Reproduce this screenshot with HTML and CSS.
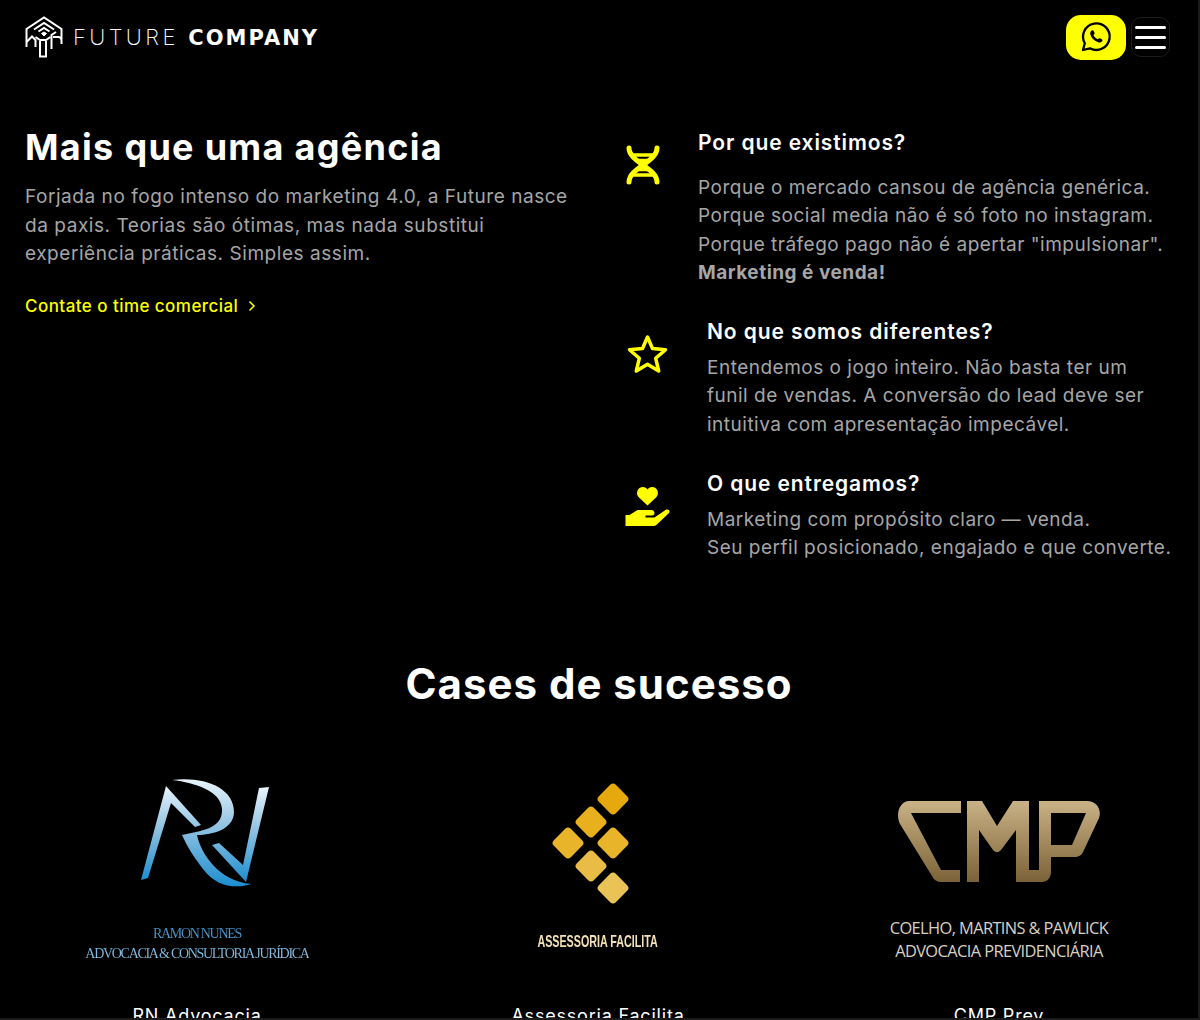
FILE: index.html
```html
<!DOCTYPE html>
<html lang="pt-BR">

<head>
    <meta charset="UTF-8">
    <title>Future Company</title>
    <link rel="stylesheet" href="styles.css">
</head>

<body>
    <div class="page">
        <header class="top">
            <a class="brand" href="#">
                <svg class="brand-mark" viewBox="0 0 38 42" fill="none" stroke="#fff" stroke-width="2">
                    <path d="M1.500 31V13L19 1.500 36.500 13v10" />
                    <path d="M1.500 26 7 20.500l3.500 3.500v7" />
                    <path d="M26.500 33V19l4.500-3" />
                    <path d="M28 21h5.500c2 0 3 1.500 3 3.500V28" />
                    <path d="M15 25v15.500h6V25" />
                    <path d="M10.500 21 15 24h6l4.500-3" />
                    <path d="M9 13.500 19 7l10 6.500" />
                    <path d="M13.500 15.500 19 12l5.500 3.500" />
                    <path d="M16.500 17.500 19 16l2.500 1.500L19 20z" fill="#fff" stroke-width="1" />
                </svg>
                <span class="brand-name">FUTURE <b>COMPANY</b></span>
            </a>
            <div class="top-actions">
                <a class="wa-btn" href="#">
                    <svg viewBox="0 0 32 32" width="32" height="32" fill="none" stroke="#000" stroke-width="2.300">
                        <path d="M3 29l1.800-6.800A13.300 13.300 0 1 1 10 27.300z" stroke-linejoin="round" />
                        <path d="M11.600 9.600c.6-.6 1.500-.5 1.900.2l1 1.900c.3.5.2 1-.2 1.400l-.8.800c.8 2 2.300 3.500 4.400 4.400l.8-.8c.4-.4.9-.5 1.400-.2l1.800 1c.7.4.8 1.300.2 1.900-1 1.100-2.400 1.500-3.800 1-4.100-1.300-6.900-4.100-8-8-.3-1.200.2-2.600 1.300-3.600z" fill="#000" stroke="none" />
                    </svg>
                </a>
                <button class="menu-btn"><i></i><i></i><i></i></button>
            </div>
        </header>

        <section class="about">
            <div class="about-left">
                <h1>Mais que uma agência</h1>
                <p>Forjada no fogo intenso do marketing 4.0, a Future nasce da paxis. Teorias são ótimas, mas nada substitui experiência práticas. Simples assim.</p>
                <a class="more" href="#">Contate o time comercial
                    <svg viewBox="0 0 8 12" width="8" height="12" fill="none" stroke="#ffff00" stroke-width="1.500"><path d="M1.500 1.500 6 6l-4.500 4.500" /></svg>
                </a>
            </div>
            <div class="about-right">
                <div class="item item-first">
                    <svg class="item-icon" viewBox="0 0 36 40" fill="none" stroke="#ffff00" stroke-width="5" stroke-linecap="round">
                        <path d="M4 3c0 14 28 20 28 34" />
                        <path d="M32 3c0 14-28 20-28 34" />
                        <path d="M5 10h26M12 15.500h12M12 24.500h12M5 30h26" stroke-width="3.500" stroke-linecap="butt" />
                    </svg>
                    <div>
                        <h3>Por que existimos?</h3>
                        <p>Porque o mercado cansou de agência genérica.<br>Porque social media não é só foto no instagram.<br>Porque tráfego pago não é apertar "impulsionar".<br><b>Marketing é venda!</b></p>
                    </div>
                </div>
                <div class="item">
                    <svg class="item-icon" viewBox="0 0 40 40" fill="none" stroke="#ffff00" stroke-width="3.500" stroke-linejoin="round">
                        <path d="M20 3l5 11.500 13 1.200-9.800 8.600 3 12.700L20 30.200 8.800 37l3-12.700L2 15.700l13-1.200z" />
                    </svg>
                    <div>
                        <h3>No que somos diferentes?</h3>
                        <p>Entendemos o jogo inteiro. Não basta ter um funil de vendas. A conversão do lead deve ser intuitiva com apresentação impecável.</p>
                    </div>
                </div>
                <div class="item">
                    <svg class="item-icon" viewBox="0 0 44 40" fill="#ffff00">
                        <path d="M22 19.500 13.500 11.500C9.500 7.500 12 1 17.500 1c2 0 3.500 1 4.500 2.500C23 2 24.500 1 26.500 1c5.500 0 8 6.500 4 10.500z" />
                        <path d="M0 29h4l8-5h14c3.500 0 4 5 1 5.500h-7v2h9l11-7.500c3-1.500 5 1 3.500 3L33 37c-2 2-3 3-5 3H0z" />
                    </svg>
                    <div>
                        <h3>O que entregamos?</h3>
                        <p>Marketing com propósito claro — venda.<br>Seu perfil posicionado, engajado e que converte.</p>
                    </div>
                </div>
            </div>
        </section>

        <section class="cases">
            <h2>Cases de sucesso</h2>
            <div class="case-list">
                <div class="case">
                    <div class="logo">
                        <svg class="rn-mark" viewBox="0 0 130 110" width="130" height="110">
                            <defs>
                                <linearGradient id="rnBlue" x1="0" y1="0" x2="0" y2="1">
                                    <stop offset="0" stop-color="#e8f4fb" />
                                    <stop offset="0.5" stop-color="#86bde0" />
                                    <stop offset="1" stop-color="#1c8ed0" />
                                </linearGradient>
                            </defs>
                            <path fill="url(#rnBlue)" d="M0 101 25 7 60 46 54 48 30 24 7 99Z" />
                            <path fill="url(#rnBlue)" d="M31 1C62-3 93 8 93 33 93 50 72 56 56 56 60 75 78 102 110 105 95 110 75 108 62 90 52 77 46 67 41 56 60 52 82 50 81 30 80 12 55 4 31 1Z" />
                            <path fill="url(#rnBlue)" d="M71 66 78 64 102 86 118 9 128 8 105 103Z" />
                        </svg>
                        <div class="rn-text">RAMON NUNES<br>ADVOCACIA &amp; CONSULTORIA JURÍDICA</div>
                    </div>
                    <h4>RN Advocacia</h4>
                </div>
                <div class="case">
                    <div class="logo">
                        <div class="diamonds">
                            <i class="d1"></i><i class="d2"></i><i class="d3"></i><i class="d4"></i><i class="d5"></i><i class="d6"></i>
                        </div>
                        <div class="af-text">ASSESSORIA FACILITA</div>
                    </div>
                    <h4>Assessoria Facilita</h4>
                </div>
                <div class="case">
                    <div class="logo">
                        <svg class="cmp-mark" viewBox="0 0 204 84" width="204" height="84">
                            <defs>
                                <linearGradient id="cmpGold" x1="0" y1="0" x2="0" y2="1">
                                    <stop offset="0" stop-color="#c9b285" />
                                    <stop offset="1" stop-color="#7b6238" />
                                </linearGradient>
                            </defs>
                            <path fill="url(#cmpGold)" d="M12 1H64V13H14L44 70H63V82H44C40 82 37 80 35 76L3 24C-2 14 3 1 12 1Z" />
                            <path fill="url(#cmpGold)" d="M70 1H85L100 26 116 1H132V82H119V30L104 50C101 53 99 53 96 50L82 30V82H70Z" />
                            <path fill="url(#cmpGold)" fill-rule="evenodd" d="M142 1H190C200 1 205 10 202 18L187 50C185 55 182 57 178 57H154V72C154 78 150 82 145 82H125V70H142ZM154 13V45H175L189 13Z" />
                        </svg>
                        <div class="cmp-text">COELHO, MARTINS &amp; PAWLICK<br>ADVOCACIA PREVIDENCIÁRIA</div>
                    </div>
                    <h4>CMP Prev</h4>
                </div>
            </div>
        </section>
    </div>
</body>

</html>
```

FILE: styles.css
```css
* {
    padding: 0;
    margin: 0;
    box-sizing: border-box;
}

html,
body {
    height: 1020px;
    overflow: hidden;
    background: #1a1a1a;
}

body {
    font-family: "Inter", "Noto Sans", sans-serif;
    color: #fff;
}

a {
    text-decoration: none;
    color: inherit;
}

.page {
    height: 1018px;
    width: 1198px;
    overflow: hidden;
    background: #000;
}

.top {
    display: flex;
    justify-content: space-between;
    align-items: center;
    height: 74px;
    padding: 0 28px 0 25px;
}

.brand {
    display: flex;
    align-items: center;
    gap: 10px;
}

.brand-mark {
    width: 38px;
    height: 42px;
}

.brand-name {
    font-size: 22px;
    font-weight: 200;
    letter-spacing: 3.4px;
    white-space: nowrap;
}

.brand-name b {
    font-family: "DejaVu Sans", sans-serif;
    font-size: 21px;
    font-weight: 700;
    letter-spacing: 2px;
}

.top-actions {
    display: flex;
    align-items: center;
    gap: 5px;
}

.wa-btn {
    display: flex;
    align-items: center;
    justify-content: center;
    width: 60px;
    height: 45px;
    background: #ffff00;
    border-radius: 15px;
}

.menu-btn {
    display: flex;
    flex-direction: column;
    justify-content: center;
    gap: 7px;
    width: 39px;
    height: 40px;
    padding: 0 3px;
    background: #000;
    border: 1px solid #1c1c1c;
    border-radius: 10px;
}

.menu-btn i {
    display: block;
    height: 3px;
    border-radius: 2px;
    background: #fff;
}

.about {
    display: flex;
    padding: 0 25px;
    height: 530px;
}

.about-left {
    width: 600px;
    padding-top: 51px;
}

.about-left h1 {
    font-size: 36px;
    font-weight: 700;
    line-height: 44px;
    letter-spacing: 1.3px;
    margin-bottom: 14px;
}

.about-left p {
    width: 560px;
    font-size: 19px;
    line-height: 28.5px;
    letter-spacing: 0.55px;
    color: #a6a6a6;
}

.more {
    display: flex;
    align-items: center;
    gap: 10px;
    margin-top: 25px;
    font-size: 17px;
    font-weight: 500;
    line-height: 24px;
    letter-spacing: 0.45px;
    color: #ffff00;
}

.about-right {
    flex: 1;
    display: flex;
    flex-direction: column;
    gap: 31px;
    padding-top: 55px;
}

.item {
    display: flex;
    gap: 37px;
}

.item-icon {
    flex: none;
    width: 45px;
    height: 40px;
    margin-top: 16px;
}

.item-first .item-icon {
    width: 36px;
}

.item h3 {
    font-size: 21px;
    font-weight: 600;
    line-height: 28px;
    letter-spacing: 0.9px;
    margin-bottom: 8px;
}

.item-first h3 {
    margin-bottom: 17px;
}

.item p {
    font-size: 19px;
    line-height: 28.3px;
    letter-spacing: 0.5px;
    color: #a6a6a6;
}

.item p b {
    font-weight: 700;
}

.cases h2 {
    font-size: 42px;
    font-weight: 700;
    line-height: 52px;
    letter-spacing: 1px;
    text-align: center;
    margin-top: 54px;
}

.case-list {
    display: grid;
    grid-template-columns: 1fr 1fr 1fr;
    margin: 69px -1.5px 0 -3.5px;
}

.case {
    text-align: center;
}

.logo {
    height: 225px;
    display: flex;
    flex-direction: column;
    align-items: center;
}

.case h4 {
    font-size: 18px;
    font-weight: 400;
    line-height: 24px;
    letter-spacing: 0.8px;
}

.rn-mark {
    margin-left: 18px;
}

.rn-text {
    margin-top: 35px;
    font-family: "Liberation Serif", serif;
    font-size: 14px;
    line-height: 20px;
    letter-spacing: -1.3px;
    background: linear-gradient(#2f86c2, #9fd0ee);
    -webkit-background-clip: text;
    background-clip: text;
    color: transparent;
}

.diamonds {
    position: relative;
    width: 76px;
    height: 122px;
    margin-top: 5px;
}

.diamonds i {
    position: absolute;
    width: 24px;
    height: 24px;
    border-radius: 4px;
    transform: rotate(45deg);
}

.d1 { left: 40.7px; top: 3px; background: #e5a90d; }
.d2 { left: 18.7px; top: 25.7px; background: #e8b01c; }
.d3 { left: -4px; top: 47px; background: #e8b42a; }
.d4 { left: 40.7px; top: 47px; background: #e8b42a; }
.d5 { left: 18.7px; top: 70px; background: #e9bd45; }
.d6 { left: 40.7px; top: 92px; background: #e9c356; }

.af-text {
    margin-top: 25px;
    font-family: "Liberation Sans", sans-serif;
    font-size: 16.5px;
    font-weight: 700;
    line-height: 20px;
    white-space: nowrap;
    transform: scaleX(0.65);
    color: #f4e1b5;
}

.cmp-mark {
    margin-top: 21px;
}

.cmp-text {
    margin-top: 32px;
    font-family: "Open Sans", sans-serif;
    font-size: 16.4px;
    line-height: 23px;
    letter-spacing: -0.6px;
    color: #d8d2c4;
}
```
